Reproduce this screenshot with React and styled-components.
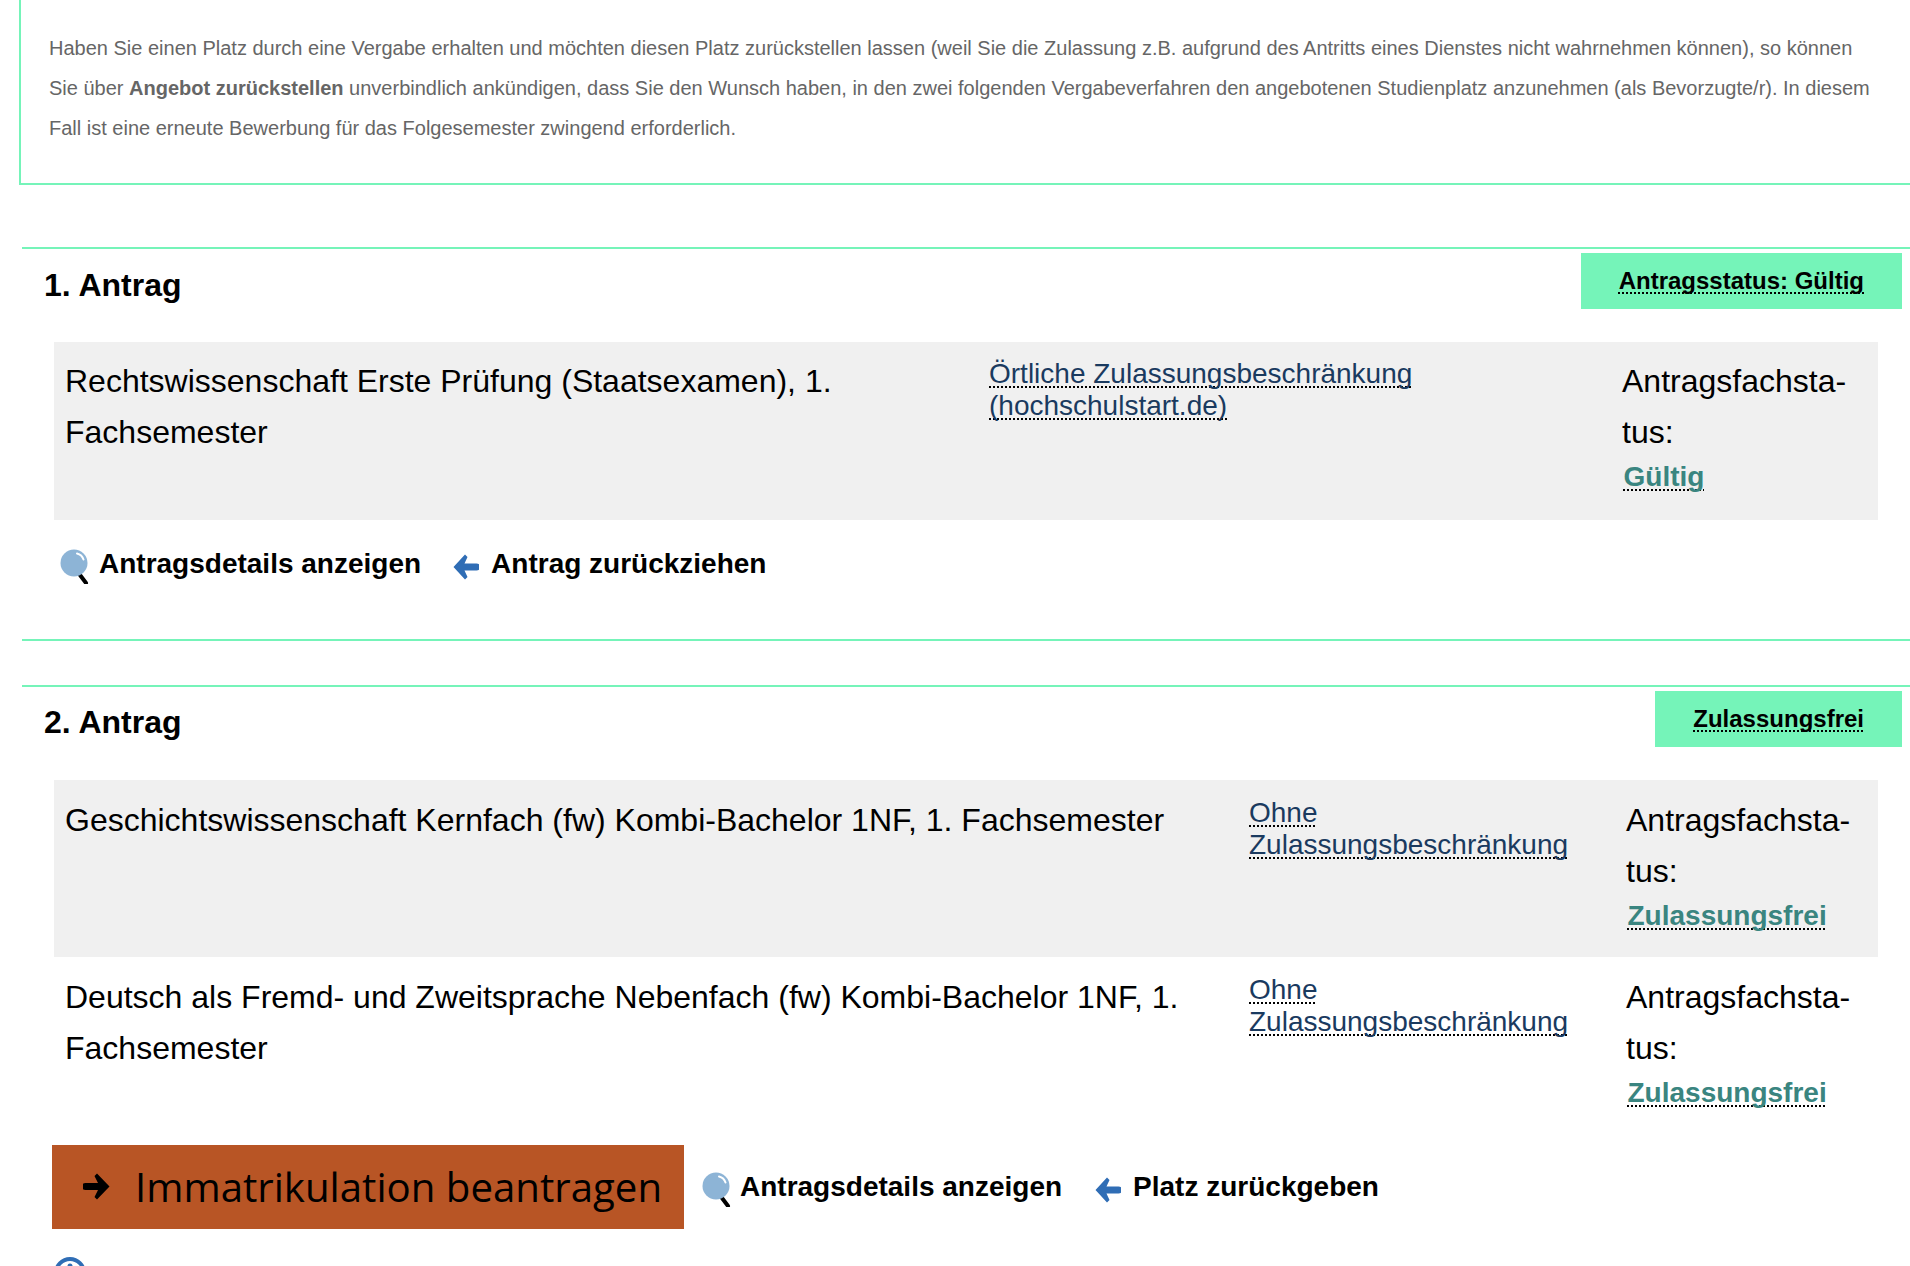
import React from 'react';
import styled, { createGlobalStyle, css } from 'styled-components';

const GlobalStyle = createGlobalStyle`
  html, body {
    margin: 0;
    padding: 0;
    background: #fff;
    overflow: hidden;
  }
  body {
    font-family: 'Liberation Sans', Arial, sans-serif;
    color: #000;
  }
`;

const dottedUnderline = css`
  text-decoration: underline dotted #000 2px;
  text-decoration-skip-ink: none;
  text-underline-offset: 3px;
`;

const Page = styled.div`
  width: 1910px;
  height: 1266px;
  overflow: hidden;
`;

const Notice = styled.div`
  margin-left: 19px;
  height: 185px;
  box-sizing: border-box;
  border-left: 2px solid #75f4b9;
  border-bottom: 2px solid #75f4b9;
  padding: 28px 0 0 28px;
  font-size: 20px;
  line-height: 40px;
  color: #666;
  white-space: nowrap;

  strong {
    font-weight: 700;
  }
`;

const Section = styled.section`
  margin: ${p => p.$top}px 0 0 22px;
  border-top: 2px solid #75f4b9;
  border-bottom: ${p => (p.$closed ? '2px solid #75f4b9' : 'none')};
  height: ${p => p.$height}px;
  box-sizing: border-box;
`;

const SectionHead = styled.div`
  display: flex;
  justify-content: space-between;
  align-items: flex-start;
  height: 56px;
  padding: 4px 8px 0 22px;
  margin-bottom: 33px;
`;

const Title = styled.h2`
  margin: ${p => p.$drop}px 0 0;
  font-size: 32px;
  line-height: 56px;
  font-weight: 700;
`;

const Badge = styled.div`
  height: 56px;
  box-sizing: border-box;
  padding: 0 38px;
  display: flex;
  align-items: center;
  background: #75f4b9;
  font-size: 24px;
  font-weight: 700;

  span {
    ${dottedUnderline}
  }
`;

const Row = styled.div`
  display: grid;
  grid-template-columns: ${p => p.$cols};
  margin: 0 32px;
  height: ${p => p.$height}px;
  padding-top: ${p => p.$inset || 0}px;
  background: ${p => (p.$shaded ? '#f0f0f0' : 'transparent')};
`;

const Subject = styled.div`
  padding: 14px 12px 0 11px;
  font-size: 32px;
  line-height: 51px;
`;

const Restriction = styled.div`
  padding: 16px 12px 0;
  font-size: 28px;
  line-height: 32px;
  color: #1a3a5f;

  span {
    ${dottedUnderline}
  }
`;

const Status = styled.div`
  padding: 14px 12px 0;
  font-size: 32px;
  line-height: 51px;
`;

const StatusValue = styled.div`
  margin-left: 1.5px;
  font-size: 28px;
  line-height: 38px;
  font-weight: 700;
  color: #3a8580;

  span {
    ${dottedUnderline}
  }
`;

const Actions = styled.div`
  display: flex;
  align-items: center;
  padding-left: ${p => p.$left}px;
  margin-top: ${p => p.$top}px;
`;

const ActionLink = styled.a`
  display: flex;
  align-items: center;
  margin-right: ${p => p.$gap}px;
  font-size: 28px;
  font-weight: 700;
  line-height: 36px;
  color: #000;
`;

const IconSlot = styled.span`
  display: flex;
  margin-right: ${p => p.$gap}px;
  margin-top: ${p => p.$drop || 0}px;
`;

const ApplyButton = styled.a`
  display: flex;
  align-items: center;
  height: 84px;
  width: 632px;
  box-sizing: border-box;
  margin-right: 18px;
  padding: 0 0 2px 31px;
  background: #b85525;
  color: #000;
  font-family: 'Open Sans', 'Noto Sans', sans-serif;
  font-size: 40.2px;
  white-space: nowrap;
`;

const InfoSlot = styled.div`
  margin: 28px 0 0 32px;
  display: flex;
`;

const Magnifier = () => (
  <svg width="29" height="35" viewBox="0 0 29 35">
    <path d="M20 26l6 8" stroke="#000" strokeWidth="4" strokeLinecap="round" />
    <circle cx="14" cy="14" r="13.5" fill="#8db4d6" />
    <path d="M17 4.5a9 9 0 0 1 6.5 6" fill="none" stroke="#fff" strokeWidth="2" strokeLinecap="round" />
  </svg>
);

const BackArrow = () => (
  <svg width="26" height="26" viewBox="0 0 26 26">
    <path d="M12 .5L.5 13 12 25.500l2.500-2.500-3-6.500h12a3.500 3.500 0 0 0 0-7h-12l3-6.500z" fill="#2f6db5" />
  </svg>
);

const ForwardArrow = () => (
  <svg width="27" height="27" viewBox="0 0 27 27">
    <path d="M14 .5l12.500 13L14 26.500 11.500 24l3.500-7H2.500a3.500 3.500 0 0 1 0-7H15l-3.500-7z" fill="#000" />
  </svg>
);

const InfoIcon = () => (
  <svg width="32" height="32" viewBox="0 0 32 32">
    <circle cx="16" cy="16" r="14" fill="#fff" stroke="#2f6db5" strokeWidth="4" />
    <circle cx="16" cy="9" r="2.500" fill="#2f6db5" />
    <rect x="13.500" y="13" width="5" height="11" fill="#2f6db5" />
  </svg>
);

const Link = ({ children }) => <span>{children}</span>;

const App = () => (
  <Page>
    <GlobalStyle />
    <Notice>
      Haben Sie einen Platz durch eine Vergabe erhalten und möchten diesen Platz zurückstellen lassen (weil Sie die Zulassung z.B. aufgrund des Antritts eines Dienstes nicht wahrnehmen können), so können
      <br />
      Sie über <strong>Angebot zurückstellen</strong> unverbindlich ankündigen, dass Sie den Wunsch haben, in den zwei folgenden Vergabeverfahren den angebotenen Studienplatz anzunehmen (als Bevorzugte/r). In diesem
      <br />
      Fall ist eine erneute Bewerbung für das Folgesemester zwingend erforderlich.
    </Notice>

    <Section $top={62} $height={394} $closed>
      <SectionHead>
        <Title $drop={4}>1. Antrag</Title>
        <Badge><Link>Antragsstatus: Gültig</Link></Badge>
      </SectionHead>
      <Row $shaded $height={178} $cols="923px 633px 268px">
        <Subject>
          Rechtswissenschaft Erste Prüfung (Staatsexamen), 1.
          <br />
          Fachsemester
        </Subject>
        <Restriction>
          <Link>Örtliche Zulassungsbeschränkung</Link>
          <br />
          <Link>(hochschulstart.de)</Link>
        </Restriction>
        <Status>
          Antragsfachsta-
          <br />
          tus:
          <StatusValue>
            <Link>Gültig</Link>
          </StatusValue>
        </Status>
      </Row>
      <Actions $left={38} $top={24}>
        <ActionLink $gap={32}>
          <IconSlot $gap={10} $drop={5}><Magnifier /></IconSlot>
          Antragsdetails anzeigen
        </ActionLink>
        <ActionLink $gap={0}>
          <IconSlot $gap={12} $drop={5}><BackArrow /></IconSlot>
          Antrag zurückziehen
        </ActionLink>
      </Actions>
    </Section>

    <Section $top={44} $height={581}>
      <SectionHead>
        <Title $drop={3}>2. Antrag</Title>
        <Badge><Link>Zulassungsfrei</Link></Badge>
      </SectionHead>
      <Row $shaded $height={176} $inset={1} $cols="1183px 377px 264px">
        <Subject>Geschichtswissenschaft Kernfach (fw) Kombi-Bachelor 1NF, 1. Fachsemester</Subject>
        <Restriction>
          <Link>Ohne</Link>
          <br />
          <Link>Zulassungsbeschränkung</Link>
        </Restriction>
        <Status>
          Antragsfachsta-
          <br />
          tus:
          <StatusValue>
            <Link>Zulassungsfrei</Link>
          </StatusValue>
        </Status>
      </Row>
      <Row $height={176} $inset={1} $cols="1183px 377px 264px">
        <Subject>
          Deutsch als Fremd- und Zweitsprache Nebenfach (fw) Kombi-Bachelor 1NF, 1.
          <br />
          Fachsemester
        </Subject>
        <Restriction>
          <Link>Ohne</Link>
          <br />
          <Link>Zulassungsbeschränkung</Link>
        </Restriction>
        <Status>
          Antragsfachsta-
          <br />
          tus:
          <StatusValue>
            <Link>Zulassungsfrei</Link>
          </StatusValue>
        </Status>
      </Row>
      <Actions $left={30} $top={11}>
        <ApplyButton>
          <IconSlot $gap={25}><ForwardArrow /></IconSlot>
          Immatrikulation beantragen
        </ApplyButton>
        <ActionLink $gap={33}>
          <IconSlot $gap={9} $drop={5}><Magnifier /></IconSlot>
          Antragsdetails anzeigen
        </ActionLink>
        <ActionLink $gap={0}>
          <IconSlot $gap={12} $drop={5}><BackArrow /></IconSlot>
          Platz zurückgeben
        </ActionLink>
      </Actions>
      <InfoSlot>
        <InfoIcon />
      </InfoSlot>
    </Section>
  </Page>
);

export default App;
